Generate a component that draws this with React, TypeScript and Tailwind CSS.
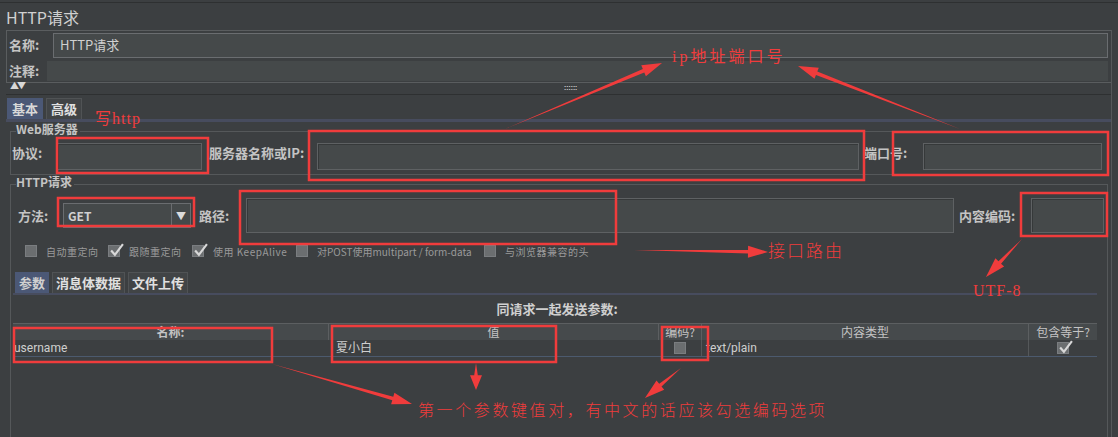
import React from 'react';

const cjk = "font-['Noto_Sans_CJK_SC','Noto_Sans',sans-serif]";
const red = '#f03c3c';

function Field({ className = '' }: { className?: string }) {
  return (
    <div
      className={`h-full bg-[#45494a] border border-[#5e6163] shadow-[inset_1px_1px_0_#36393a] ${className}`}
    />
  );
}

function Check({ checked = false }: { checked?: boolean }) {
  return (
    <span className="relative inline-flex w-[12px] h-[12px] bg-[#6b6e70] border border-[#7a7d80] shrink-0">
      {checked && (
        <svg viewBox="0 0 14 14" className="absolute -top-[3px] left-0 w-[15px] h-[15px]">
          <path d="M2 7 L5.5 11 L13 1" fill="none" stroke="#d8d8d8" strokeWidth="2" />
        </svg>
      )}
    </span>
  );
}

function Annotations() {
  const boxes = [
    [57, 138, 151, 35],
    [309, 131, 555, 49],
    [893, 132, 215, 43],
    [58, 198, 136, 28],
    [240, 191, 376, 53],
    [1021, 193, 86, 43],
    [14, 328, 258, 34],
    [332, 326, 224, 36],
    [662, 327, 46, 33],
  ];
  const arrows: [number, number, number, number][] = [
    [505, 129, 662, 63],
    [960, 129, 798, 66],
    [634, 250, 768, 252],
    [1022, 239, 986, 277],
    [272, 364, 412, 404],
    [476, 363, 476, 390],
    [681, 368, 645, 398],
  ];
  return (
    <svg className="absolute inset-0 pointer-events-none" width="1118" height="437">
      {boxes.map(([x, y, w, h], i) => (
        <rect key={i} x={x} y={y} width={w} height={h} fill="none" stroke={red} strokeWidth="2.5" />
      ))}
      {arrows.map(([x1, y1, x2, y2], i) => {
        const a = Math.atan2(y2 - y1, x2 - x1);
        const len = Math.hypot(x2 - x1, y2 - y1);
        const head = Math.min(20, len * 0.55);
        const bx = x2 - Math.cos(a) * head;
        const by = y2 - Math.sin(a) * head;
        const px = -Math.sin(a);
        const py = Math.cos(a);
        const hw = 6;
        const sw = 1.8;
        const pts = [
          [x1, y1],
          [bx + px * sw, by + py * sw],
          [bx + px * hw, by + py * hw],
          [x2, y2],
          [bx - px * hw, by - py * hw],
          [bx - px * sw, by - py * sw],
        ];
        return (
          <polygon key={i} points={pts.map((p) => p.join(',')).join(' ')} fill={red} />
        );
      })}
    </svg>
  );
}

export default function App() {
  return (
    <div className={`relative w-[1118px] h-[437px] overflow-hidden bg-[#3c3f41] text-[#c4c4c4] ${cjk}`}>
      <div className="h-[3px] border-b border-[#2e3031]" />
      {/* title */}
      <div className="h-[27px] pl-[6px] flex items-center text-[16px] leading-none text-[#d0d0d0]">
        HTTP请求
      </div>

      {/* name / comment */}
      <div className="ml-[6px] mr-[6px] border border-[#5a5d5f] flex flex-col">
        <div className="h-[28px] flex items-center">
          <span className="w-[46px] pl-[2px] text-[13px] font-semibold">名称:</span>
          <div className="flex-1 h-[25px] mr-[3px] bg-[#45494a] border border-[#6a6d70] flex items-center pl-[6px] text-[13px] text-[#d0d0d0]">
            HTTP请求
          </div>
        </div>
        <div className="h-[23px] flex items-center">
          <span className="w-[40px] pl-[2px] text-[13px] font-semibold">注释:</span>
          <div className="flex-1 h-[20px] mr-[3px] bg-[#45494a]" />
        </div>
      </div>

      {/* divider */}
      <div className="relative h-[12px] mx-[6px] border-b border-[#2e3031]">
        <span className="absolute left-[4px] top-[-2px] text-[9px] leading-none text-[#d8d8d8] tracking-[-2px]">▲▼</span>
        <span className="absolute left-[558px] top-[0px] text-[8px] leading-none text-[#e0e0e0]">::::::</span>
      </div>

      {/* tabs */}
      <div className="h-[24px] pl-[7px] pt-[3px] flex items-end gap-[3px] text-[13px] font-semibold">
        <div className="h-[21px] px-[5px] flex items-center bg-[#4b5876] text-[#d8d8d8]">基本</div>
        <div className="h-[21px] px-[4px] flex items-center bg-[#414446] border-t border-x border-[#505355] text-[#e0e0e0]">高级</div>
      </div>

      <div className="mx-[6px] border-t-[3px] border-[#474c5e] h-[320px] px-[4px] flex flex-col">
        {/* web server */}
        <div className="relative mt-[9px] border border-[#55585a] h-[44px] flex items-center">
          <span className="absolute -top-[9px] left-[5px] bg-[#3c3f41] text-[12px] leading-none font-semibold pr-[2px]">Web服务器</span>
          <span className="w-[46px] pl-[1px] text-[13px] font-semibold">协议:</span>
          <div className="w-[145px] h-[27px] mt-[6px]"><Field /></div>
          <span className="ml-[7px] w-[108px] text-[13px] font-semibold whitespace-nowrap">服务器名称或IP:</span>
          <div className="w-[542px] h-[27px] mt-[6px]"><Field /></div>
          <span className="ml-[5px] w-[59px] text-[13px] font-semibold">端口号:</span>
          <div className="w-[179px] h-[27px] mt-[6px]"><Field /></div>
        </div>

        {/* http request */}
        <div className="relative mt-[9px] border-l border-r border-t border-[#55585a] flex-1 flex flex-col">
          <span className="absolute -top-[9px] left-[5px] bg-[#3c3f41] text-[12px] leading-none font-semibold pr-[2px]">HTTP请求</span>
          <div className="mt-[13px] h-[35px] flex items-center">
            <span className="w-[52px] pl-[7px] text-[13px] font-semibold">方法:</span>
            <div className="w-[128px] h-[25px] bg-[#45494a] border border-[#6a6d70] flex items-center">
              <span className="flex-1 pl-[4px] text-[12px] font-semibold text-[#d0d0d0]">GET</span>
              <span className="w-[19px] h-full border-l border-[#6a6d70] flex items-center justify-center text-[10px] text-[#dcdcdc]">▼</span>
            </div>
            <span className="ml-[8px] w-[47px] text-[13px] font-semibold">路径:</span>
            <div className="w-[708px] h-[35px]"><Field /></div>
            <span className="ml-[5px] w-[72px] text-[13px] font-semibold">内容编码:</span>
            <div className="w-[73px] h-[35px]"><Field /></div>
          </div>

          {/* checkboxes */}
          <div className="mt-[10px] h-[16px] flex items-center pl-[14px] text-[10px] text-[#9a9a9a] tracking-[0.5px]">
            <Check />
            <span className="ml-[9px] w-[62px] whitespace-nowrap">自动重定向</span>
            <Check checked />
            <span className="ml-[9px] w-[63px] whitespace-nowrap">跟随重定向</span>
            <Check checked />
            <span className="ml-[9px] w-[83px] whitespace-nowrap">使用 KeepAlive</span>
            <Check />
            <span className="ml-[9px] w-[167px] whitespace-nowrap tracking-[0px]">对POST使用multipart / form-data</span>
            <Check />
            <span className="ml-[9px] whitespace-nowrap">与浏览器兼容的头</span>
          </div>

          {/* sub tabs */}
          <div className="mt-[12px] h-[22px] pl-[4px] flex items-end gap-[3px] text-[13px] font-semibold">
            <div className="h-[21px] px-[4px] flex items-center bg-[#4b5876] text-[#d0d0d0]">参数</div>
            <div className="h-[21px] px-[3px] flex items-center bg-[#414446] border-t border-x border-[#505355] text-[#e0e0e0]">消息体数据</div>
            <div className="h-[21px] px-[3px] flex items-center bg-[#414446] border-t border-x border-[#505355] text-[#e0e0e0]">文件上传</div>
          </div>

          <div className="mr-[10px] ml-[2px] border-t-[2px] border-[#474c5e] flex-1 flex flex-col">
            <div className="h-[28px] flex items-center justify-center text-[13px] font-semibold pl-[4px] text-[#d0d0d0]">
              同请求一起发送参数:
            </div>
            {/* table */}
            <div className="h-[17px] flex text-[12px] leading-none bg-[#464a4c] border-t border-[#5c5f61]">
              <div className="w-[316px] flex items-center justify-center border-r border-[#5c5f61] font-semibold">名称:</div>
              <div className="w-[330px] flex items-center justify-center border-r border-[#5c5f61]">值</div>
              <div className="w-[43px] flex items-center justify-center border-r border-[#5c5f61]">编码?</div>
              <div className="w-[327px] flex items-center justify-center border-r border-[#5c5f61]">内容类型</div>
              <div className="flex-1 flex items-center justify-center">包含等于?</div>
            </div>
            <div className="h-[17px] flex text-[12px] leading-none border-b border-[#4c5a6e] text-[#cfcfcf] font-['Roboto','Noto_Sans_CJK_SC',sans-serif]">
              <div className="w-[316px] flex items-center pl-[1px]">username</div>
              <div className="w-[330px] flex items-center pl-[7px]">夏小白</div>
              <div className="w-[43px] flex items-center justify-center border-r border-[#55585a]"><Check /></div>
              <div className="w-[327px] flex items-center pl-[4px] border-r border-[#55585a]">text/plain</div>
              <div className="flex-1 flex items-center justify-center"><Check checked /></div>
            </div>
          </div>
        </div>
      </div>

      {/* right edge scrollbar line */}
      <div className="absolute right-[6px] top-[30px] bottom-0 w-[1px] bg-[#55585a]" />

      <Annotations />

      <span className="absolute left-[95px] top-[111px] text-[16px] leading-none tracking-[1px] font-['Liberation_Serif','Noto_Sans_CJK_SC',serif] text-[#f03c3c]">写http</span>
      <span className="absolute left-[672px] top-[49px] text-[16px] leading-none tracking-[3px] font-['Liberation_Serif','Noto_Sans_CJK_SC',serif] text-[#f03c3c]">ip地址端口号</span>
      <span className="absolute left-[768px] top-[241px] text-[17px] leading-none tracking-[2px] font-['Noto_Sans_CJK_SC',sans-serif] font-light text-[#f03c3c]">接口路由</span>
      <span className="absolute left-[973px] top-[283px] text-[16px] leading-none tracking-[1px] font-['Liberation_Serif',serif] text-[#f03c3c]">UTF-8</span>
      <span className="absolute left-[418px] top-[401px] text-[16px] leading-none tracking-[2.6px] font-['Noto_Sans_CJK_SC',sans-serif] font-light text-[#f03c3c]">第一个参数键值对，有中文的话应该勾选编码选项</span>
    </div>
  );
}
